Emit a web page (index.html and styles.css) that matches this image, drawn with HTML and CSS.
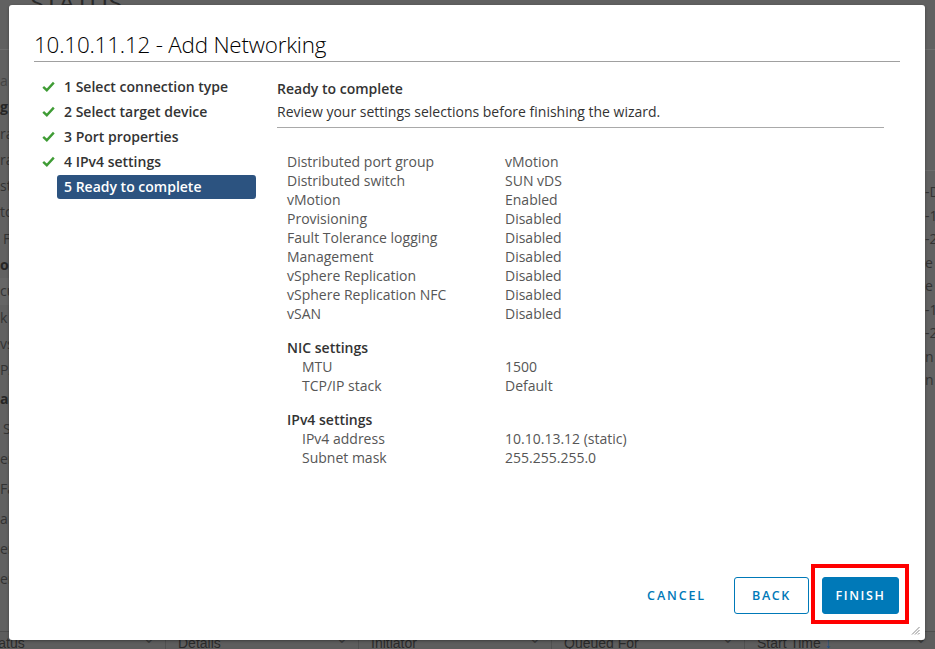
FILE: index.html
```html
<!DOCTYPE html>
<html>
<head>
<meta charset="utf-8">
<link rel="stylesheet" href="styles.css">
</head>
<body>
<div class="page">
  <div class="bg-top"><span class="bg-heading">STATUS</span></div>
  <div class="bg-main">
    <div class="bg-left">
      <div class="bl light">a</div>
      <div class="bl bold">g</div>
      <div class="bl">ra</div>
      <div class="bl">ra</div>
      <div class="bl">st</div>
      <div class="bl">to</div>
      <div class="bl ind">F</div>
      <div class="bl bold">o</div>
      <div class="bl sel">cu</div>
      <div class="bl">k</div>
      <div class="bl">vs</div>
      <div class="bl">P/</div>
      <div class="bl2 bold">al</div>
      <div class="bl2 ind">S</div>
      <div class="bl2">er</div>
      <div class="bl2">Fa</div>
      <div class="bl2">a</div>
      <div class="bl2">er</div>
      <div class="bl2">er</div>
    </div>
    <div class="bg-right">
      <div class="br">-D</div>
      <div class="br">-1</div>
      <div class="br">-2</div>
      <div class="br">e</div>
      <div class="br">e</div>
      <div class="br">-1</div>
      <div class="br">-2</div>
      <div class="br">n</div>
      <div class="br">n</div>
    </div>
  </div>
  <div class="bg-grid-head">
    <div class="col first">Status <span class="chev">&#8964;</span></div>
    <div class="col">Details <span class="chev">&#8964;</span></div>
    <div class="col">Initiator <span class="chev">&#8964;</span></div>
    <div class="col">Queued For <span class="chev">&#8964;</span></div>
    <div class="col">Start Time <span class="arrow">&#8595;</span><span class="chev">&#8964;</span></div>
  </div>
</div>

<div class="modal">
  <div class="modal-header">
    <h3 class="modal-title">10.10.11.12 - Add Networking</h3>
  </div>
  <div class="modal-body">
    <nav class="steps">
      <div class="step done"><span class="step-icon"><svg width="13" height="11" viewBox="0 0 13 11"><path d="M1.2 5.8 L4.8 9.2 L11.8 1.6" fill="none" stroke="#3f9c35" stroke-width="2.4"/></svg></span><span class="step-label">1 Select connection type</span></div>
      <div class="step done"><span class="step-icon"><svg width="13" height="11" viewBox="0 0 13 11"><path d="M1.2 5.8 L4.8 9.2 L11.8 1.6" fill="none" stroke="#3f9c35" stroke-width="2.4"/></svg></span><span class="step-label">2 Select target device</span></div>
      <div class="step done"><span class="step-icon"><svg width="13" height="11" viewBox="0 0 13 11"><path d="M1.2 5.8 L4.8 9.2 L11.8 1.6" fill="none" stroke="#3f9c35" stroke-width="2.4"/></svg></span><span class="step-label">3 Port properties</span></div>
      <div class="step done"><span class="step-icon"><svg width="13" height="11" viewBox="0 0 13 11"><path d="M1.2 5.8 L4.8 9.2 L11.8 1.6" fill="none" stroke="#3f9c35" stroke-width="2.4"/></svg></span><span class="step-label">4 IPv4 settings</span></div>
      <div class="step active"><span class="step-icon"></span><span class="step-label">5 Ready to complete</span></div>
    </nav>
    <section class="content">
      <div class="content-head">
        <div class="content-title">Ready to complete</div>
        <div class="content-sub">Review your settings selections before finishing the wizard.</div>
      </div>
      <div class="summary">
        <div class="group">
          <div class="row"><span class="k">Distributed port group</span><span class="v">vMotion</span></div>
          <div class="row"><span class="k">Distributed switch</span><span class="v">SUN vDS</span></div>
          <div class="row"><span class="k">vMotion</span><span class="v">Enabled</span></div>
          <div class="row"><span class="k">Provisioning</span><span class="v">Disabled</span></div>
          <div class="row"><span class="k">Fault Tolerance logging</span><span class="v">Disabled</span></div>
          <div class="row"><span class="k">Management</span><span class="v">Disabled</span></div>
          <div class="row"><span class="k">vSphere Replication</span><span class="v">Disabled</span></div>
          <div class="row"><span class="k">vSphere Replication NFC</span><span class="v">Disabled</span></div>
          <div class="row"><span class="k">vSAN</span><span class="v">Disabled</span></div>
        </div>
        <div class="group">
          <div class="group-title">NIC settings</div>
          <div class="row sub"><span class="k">MTU</span><span class="v">1500</span></div>
          <div class="row sub"><span class="k">TCP/IP stack</span><span class="v">Default</span></div>
        </div>
        <div class="group">
          <div class="group-title">IPv4 settings</div>
          <div class="row sub"><span class="k">IPv4 address</span><span class="v">10.10.13.12 (static)</span></div>
          <div class="row sub"><span class="k">Subnet mask</span><span class="v">255.255.255.0</span></div>
        </div>
      </div>
    </section>
  </div>
  <div class="modal-footer">
    <button class="btn btn-link">CANCEL</button>
    <button class="btn btn-outline">BACK</button>
    <span class="highlight"><button class="btn btn-primary">FINISH</button></span>
  </div>
  <svg class="resize" width="9" height="9" viewBox="0 0 9 9"><path d="M8.5 1 L1 8.5 M8.5 4 L4 8.5 M8.5 7 L7 8.5" stroke="#8a8a8a" stroke-width="1"/></svg>
</div>
</body>
</html>
```

FILE: styles.css
```css
html, body {
  margin: 0;
  padding: 0;
}
body {
  width: 935px;
  height: 649px;
  overflow: hidden;
  background: #616161;
  font-family: "Open Sans", "Noto Sans", sans-serif;
  position: relative;
}

/* ---------- dimmed background page ---------- */
.page {
  height: 649px;
  display: flex;
  flex-direction: column;
  color: #2f2f2f;
  font-size: 14px;
}
.bg-top {
  height: 49px;
  border-bottom: 1px solid #6e6e6e;
  overflow: hidden;
}
.bg-heading {
  display: block;
  margin-top: -16px;
  margin-left: 30px;
  font-size: 26px;
  color: #2a2a2a;
}
.bg-main {
  flex: 1;
  display: flex;
  justify-content: space-between;
}
.bg-left {
  width: 30px;
  padding-top: 18px;
}
.bl {
  height: 26.3px;
  line-height: 26px;
  color: #333;
}
.bl2 {
  height: 30px;
  line-height: 30px;
  color: #333;
}
.bl.light { color: #444; }
.bold { font-weight: 700; color: #262626; }
.ind { padding-left: 3px; }
.bl.sel { background: #666; }
.bg-right {
  width: 10px;
  margin-top: 120px;
  padding-top: 9px;
  border-top: 1px solid #6d6d6d;
  overflow: hidden;
}
.br {
  height: 23.5px;
  line-height: 23px;
  color: #333;
  font-size: 14px;
  white-space: nowrap;
}
.bg-grid-head {
  height: 17px;
  display: flex;
  margin-left: -27px;
  border-top: 1px solid #4e4e4e;
  background: #5d5d5d;
  font-family: "Liberation Sans", Arial, sans-serif;
  font-size: 14px;
  color: #2b2b2b;
  line-height: 22px;
}
.col {
  width: 180px;
  flex: none;
  padding-left: 12px;
  border-right: 1px solid #505050;
  position: relative;
}
.chev {
  position: absolute;
  right: 10px;
  top: -5px;
  color: #3a3a3a;
}
.arrow { color: #1f4e86; }

/* ---------- modal ---------- */
.modal {
  position: absolute;
  left: 9px;
  top: 5px;
  width: 916px;
  height: 635px;
  background: #fff;
  border-radius: 3px;
  box-shadow: 0 1px 3px rgba(0,0,0,0.35);
  display: flex;
  flex-direction: column;
  color: #313131;
}
.modal-header {
  padding: 24px 25px 0 25px;
}
.modal-title {
  margin: 0;
  font-family: "Open Sans", sans-serif;
  font-weight: 300;
  font-size: 22.4px;
  line-height: 32px;
  color: #000;
  letter-spacing: -0.2px;
  border-bottom: 1px solid #a0a0a0;
}
.modal-body {
  flex: 1;
  display: flex;
}
.steps {
  width: 232px;
  padding-left: 25px;
  padding-top: 12px;
  flex: none;
}
.step {
  display: flex;
  align-items: center;
  height: 25px;
}
.step-icon {
  width: 23px;
  flex: none;
  padding-left: 8px;
  box-sizing: border-box;
  display: flex;
  align-items: center;
}
.step-label {
  width: 199px;
  height: 24px;
  box-sizing: border-box;
  padding: 0 7px;
  line-height: 24px;
  font-size: 14px;
  font-weight: 600;
  color: #333;
  border-radius: 3px;
  white-space: nowrap;
}
.step.active .step-label {
  background: #2c5380;
  color: #fff;
}
.content {
  margin-left: 11px;
  width: 607px;
  padding-top: 17px;
}
.content-head {
  border-bottom: 1px solid #a9a9a9;
  padding-bottom: 5px;
}
.content-title {
  font-size: 14px;
  font-weight: 600;
  line-height: 20px;
  color: #333;
}
.content-sub {
  margin-top: 3px;
  font-size: 14px;
  line-height: 20px;
  color: #333;
}
.summary {
  padding-left: 10px;
  padding-top: 24px;
  font-size: 14px;
  color: #565656;
}
.group + .group {
  margin-top: 15px;
}
.group-title {
  line-height: 19px;
  font-weight: 600;
  color: #333;
}
.row {
  display: flex;
  line-height: 19px;
}
.row .k {
  width: 218px;
  flex: none;
}
.row.sub .k {
  padding-left: 15px;
  width: 203px;
}

/* ---------- footer ---------- */
.modal-footer {
  display: flex;
  justify-content: flex-end;
  align-items: center;
  gap: 13px;
  padding: 0 26px 26px 0;
}
.btn {
  height: 37px;
  box-sizing: border-box;
  border-radius: 3px;
  font-family: "Open Sans", sans-serif;
  font-size: 12.5px;
  font-weight: 600;
  letter-spacing: 0.13em;
  padding: 0 16px;
  cursor: pointer;
}
.btn-link {
  background: none;
  border: none;
  color: #0079b8;
  padding: 0 15px 0 12px;
  letter-spacing: 0.15em;
}
.btn-outline {
  background: #fff;
  border: 1px solid #0079b8;
  color: #0079b8;
  width: 75px;
  padding: 0;
}
.btn-primary {
  background: #0079b8;
  border: 1px solid #0079b8;
  color: #fff;
  width: 77px;
  padding: 0;
}
.highlight {
  position: relative;
  display: inline-flex;
}
.highlight::after {
  content: "";
  position: absolute;
  left: -11px;
  right: -10px;
  top: -13px;
  bottom: -10px;
  border: 4px solid #f00;
  pointer-events: none;
}
.resize {
  position: absolute;
  right: 5px;
  bottom: 5px;
}
```
